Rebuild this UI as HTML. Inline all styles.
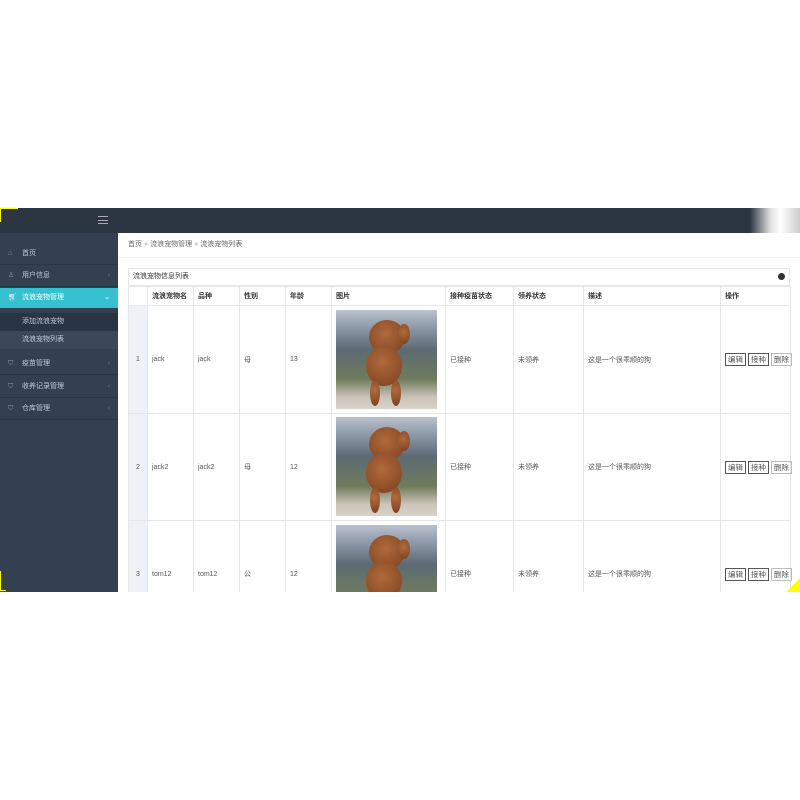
<!DOCTYPE html>
<html><head><meta charset="utf-8"><style>
*{margin:0;padding:0;box-sizing:border-box}
body{width:800px;height:800px;background:#fff;position:relative;overflow:hidden;font-family:"Liberation Sans","Noto Sans CJK SC",sans-serif;font-size:7px;color:#555}
.top{position:absolute;left:0;top:208px;width:800px;height:25px;background:#2c3643}
.side{position:absolute;left:0;top:233px;width:118px;height:359px;background:#324050}
.mi{position:absolute;left:0;width:118px;height:22px;line-height:22px;padding-left:22px;color:#bfcbd9;border-bottom:1px solid #2b3745}
.mi .ar{position:absolute;right:8px;color:#6b7a8a}
.ic{position:absolute;left:8px;color:#8a99aa}
.sub{position:absolute;left:0;width:118px;height:18px;line-height:18px;padding-left:22px;color:#bfcbd9;background:#2a3543}
.main{position:absolute;left:118px;top:233px;width:682px;height:359px;background:#fff;overflow:hidden}
.dog{position:absolute;width:101px;height:99px;background:linear-gradient(#b9c1cc 0,#8d99a8 18%,#5c6a73 40%,#6f7c5c 70%,#c9c3b8 88%,#d8d2c8 100%);overflow:hidden}
.dog i{position:absolute;border-radius:50%;background:radial-gradient(circle at 45% 40%,#b06a3c,#7a3f1e)}
td,th{border:1px solid #e6e6e6}
.b{border:1px solid #555;padding:1px 2px;font-size:7.5px}
</style></head><body>
<div class="top"><div style="position:absolute;left:98px;top:8px;width:10px;height:8px;border-top:1px solid #aab;border-bottom:1px solid #aab"><div style="margin-top:2.5px;border-top:1px solid #aab"></div></div>
<div style="position:absolute;left:0;top:0;width:18px;height:14px;border-left:1px solid #ff0;border-top:1px solid #ff0"></div>
<div style="position:absolute;left:750px;top:0;width:50px;height:25px;background:linear-gradient(90deg,#2c3643,#ddd 40%,#fff 60%,#ccc)"></div></div>
<div class="side">
<div class="mi" style="top:10px"><span class="ic">⌂</span>首页</div>
<div class="mi" style="top:32px"><span class="ic">♙</span>用户信息<span class="ar">‹</span></div>
<div class="mi" style="top:55px;height:20px;line-height:20px;background:#36c1d0;color:#fff;border:0"><span class="ic" style="color:#fff">🛒︎</span>流浪宠物管理<span class="ar" style="color:#fff">⌄</span></div>
<div class="sub" style="top:80px">添加流浪宠物</div>
<div class="sub" style="top:98px;background:#3b4858">流浪宠物列表</div>
<div class="mi" style="top:120px"><span class="ic">⛉</span>疫苗管理<span class="ar">‹</span></div>
<div class="mi" style="top:143px"><span class="ic">⛉</span>收养记录管理<span class="ar">‹</span></div>
<div class="mi" style="top:165px"><span class="ic">⛉</span>仓库管理<span class="ar">‹</span></div>
<div style="position:absolute;left:0;top:338px;width:6px;height:20px;border-left:1px solid #ff0;border-bottom:1px solid #ff0"></div>
</div>
<div class="main">
<div style="position:absolute;left:10px;top:6px;color:#666">首页 <span style="color:#ccc">●</span> 流浪宠物管理 <span style="color:#ccc">●</span> 流浪宠物列表</div>
<div style="position:absolute;left:0;top:24px;width:682px;border-top:1px solid #f0f0f0"></div>
<div style="position:absolute;left:10px;top:35px;width:662px;height:18px;border:1px solid #e6e6e6;line-height:16px;padding-left:4px;color:#333">流浪宠物信息列表<span style="position:absolute;right:4px;top:4px;width:7px;height:7px;border-radius:50%;background:#333"></span></div>
<table style="position:absolute;left:10px;top:53px;width:662px;border-collapse:collapse;table-layout:fixed;color:#555">
<colgroup><col style="width:19px"><col style="width:46px"><col style="width:46px"><col style="width:46px"><col style="width:46px"><col style="width:114px"><col style="width:68px"><col style="width:70px"><col style="width:137px"><col style="width:70px"></colgroup>
<tr style="height:19px;font-weight:bold;color:#333;text-align:left"><th></th><th style="padding-left:4px">流浪宠物名</th><th style="padding-left:4px">品种</th><th style="padding-left:4px">性别</th><th style="padding-left:4px">年龄</th><th style="padding-left:4px">图片</th><th style="padding-left:4px">接种疫苗状态</th><th style="padding-left:4px">领养状态</th><th style="padding-left:4px">描述</th><th style="padding-left:4px">操作</th></tr>
<tr style="height:108px"><td style="background:#eef1f6;text-align:center">1</td><td style="padding-left:4px">jack</td><td style="padding-left:4px">jack</td><td style="padding-left:4px">母</td><td style="padding-left:4px">13</td><td></td><td style="padding-left:4px">已接种</td><td style="padding-left:4px">未领养</td><td style="padding-left:4px">这是一个很乖顺的狗</td><td style="padding-left:4px;white-space:nowrap"><span class="b">编辑</span> <span class="b">接种</span> <span class="b" style="border-color:#bbb">删除</span></td></tr>
<tr style="height:107px"><td style="background:#eef1f6;text-align:center">2</td><td style="padding-left:4px">jack2</td><td style="padding-left:4px">jack2</td><td style="padding-left:4px">母</td><td style="padding-left:4px">12</td><td></td><td style="padding-left:4px">已接种</td><td style="padding-left:4px">未领养</td><td style="padding-left:4px">这是一个很乖顺的狗</td><td style="padding-left:4px;white-space:nowrap"><span class="b">编辑</span> <span class="b">接种</span> <span class="b" style="border-color:#bbb">删除</span></td></tr>
<tr style="height:107px"><td style="background:#eef1f6;text-align:center">3</td><td style="padding-left:4px">tom12</td><td style="padding-left:4px">tom12</td><td style="padding-left:4px">公</td><td style="padding-left:4px">12</td><td></td><td style="padding-left:4px">已接种</td><td style="padding-left:4px">未领养</td><td style="padding-left:4px">这是一个很乖顺的狗</td><td style="padding-left:4px;white-space:nowrap"><span class="b">编辑</span> <span class="b">接种</span> <span class="b" style="border-color:#bbb">删除</span></td></tr>
</table>
<div class="dog" style="left:218px;top:77px"><i style="left:33px;top:10px;width:36px;height:34px"></i><i style="left:30px;top:36px;width:36px;height:40px"></i><i style="left:34px;top:70px;width:10px;height:26px"></i><i style="left:55px;top:70px;width:10px;height:26px"></i><i style="left:62px;top:14px;width:12px;height:20px"></i></div>
<div class="dog" style="left:218px;top:184px"><i style="left:33px;top:10px;width:36px;height:34px"></i><i style="left:30px;top:36px;width:36px;height:40px"></i><i style="left:34px;top:70px;width:10px;height:26px"></i><i style="left:55px;top:70px;width:10px;height:26px"></i><i style="left:62px;top:14px;width:12px;height:20px"></i></div>
<div class="dog" style="left:218px;top:292px"><i style="left:33px;top:10px;width:36px;height:34px"></i><i style="left:30px;top:36px;width:36px;height:40px"></i><i style="left:34px;top:70px;width:10px;height:26px"></i><i style="left:55px;top:70px;width:10px;height:26px"></i><i style="left:62px;top:14px;width:12px;height:20px"></i></div>
<div style="position:absolute;right:0;bottom:0;width:0;height:0;border-left:14px solid transparent;border-bottom:14px solid #ff0"></div>
</div>
</body></html>
